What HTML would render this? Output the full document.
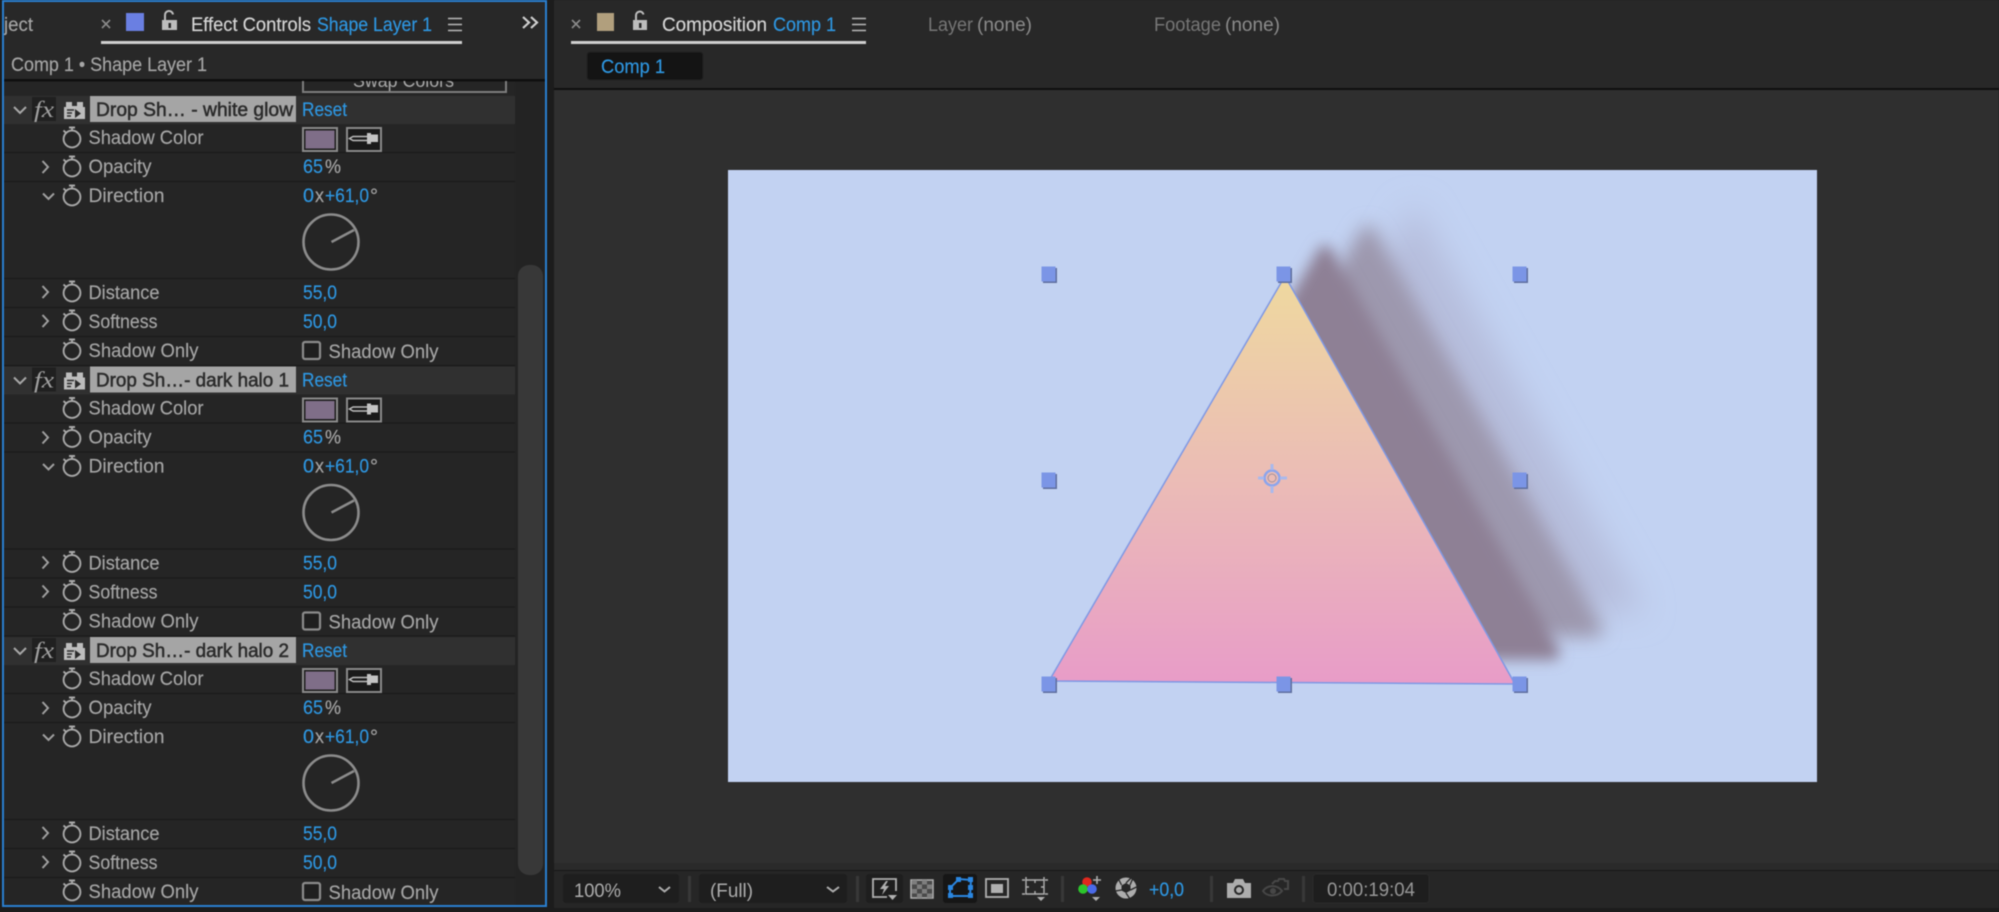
<!DOCTYPE html>
<html lang="en">
<head>
<meta charset="utf-8">
<title>Effect Controls</title>
<style>
html,body{margin:0;padding:0;background:#1c1c1c;width:1999px;height:912px;overflow:hidden}
svg{display:block}
text{font-family:"Liberation Sans",sans-serif;font-size:19px;white-space:pre}
.l{fill:#a6a6a6;stroke:#a6a6a6;stroke-width:.15}
.b{fill:#2e97e2;stroke:#2e97e2;stroke-width:.15}
.h{fill:#d6d6d6;stroke:#d6d6d6;stroke-width:.15}
.n{fill:#2b2b2b;stroke:#2b2b2b;stroke-width:.5}
.f{font-family:"Liberation Serif",serif;font-style:italic;font-size:23px;fill:#a0a0a0}
</style>
</head>
<body>
<svg xmlns="http://www.w3.org/2000/svg" width="1999" height="912" viewBox="0 0 1999 912">
<defs>
<linearGradient id="tri" x1="0" y1="276" x2="0" y2="684" gradientUnits="userSpaceOnUse">
<stop offset="0" stop-color="#efd99f"/><stop offset=".5" stop-color="#ebbcb6"/><stop offset="1" stop-color="#e89cc8"/>
</linearGradient>
<filter id="b1" x="-30%" y="-30%" width="160%" height="160%"><feGaussianBlur stdDeviation="7"/></filter>
<filter id="b2" x="-30%" y="-30%" width="160%" height="160%"><feGaussianBlur stdDeviation="9"/></filter>
<filter id="b3" x="-30%" y="-30%" width="160%" height="160%"><feGaussianBlur stdDeviation="16"/></filter>
<g id="sw" fill="none" stroke="#a8a8a8" stroke-width="1.9">
<circle cx="0" cy="2" r="8.400"/><path d="M-3 -9.500H3M0 -9.500V-6.500M-8.500 -6.500L-6 -4.200"/>
</g>
<g id="handle"><rect x="-6" y="-6" width="14" height="15" fill="#5f6f9f"/><rect x="-7.500" y="-7.500" width="14" height="15" fill="#7b95e6"/></g>
<g id="block">
<rect x="4" y="96" width="511" height="28" fill="#303030"/>
<rect x="4" y="124" width="511" height="241" fill="#252525"/>
<path d="M4 152.500H515M4 181.500H515M4 278.500H515M4 307.500H515M4 336.500H515M4 365.500H515" stroke="#1c1c1c" stroke-width="1.400"/>
<path d="M14 107l6 6 6-6" fill="none" stroke="#a8a8a8" stroke-width="2"/>
<rect x="32" y="97" width="24" height="24" fill="#202020"/>
<path d="M64 107h2v-5h6v4h5v-4h6v5h2v12H64z" fill="#bdbdbd"/>
<path d="M67 110h7M67 113h5M67 116h4" stroke="#2b2b2b" stroke-width="1.500"/><path d="M75 109l6 4.500-6 4.500z" fill="#2b2b2b"/>
<rect x="90" y="96" width="206" height="26" fill="#a5a5a5"/>
<use href="#sw" x="72" y="137"/><use href="#sw" x="72" y="166"/><use href="#sw" x="72" y="195"/>
<use href="#sw" x="72" y="291"/><use href="#sw" x="72" y="320"/><use href="#sw" x="72" y="349"/>
<path d="M42.500 161l5.500 6-5.500 6M43 193.500l5.500 5.500 5.500-5.500M42.500 286l5.500 6-5.500 6M42.500 315l5.500 6-5.500 6" fill="none" stroke="#a0a0a0" stroke-width="2"/>
<rect x="303" y="128" width="34" height="23" fill="#1d1d1d" stroke="#8a8a8a" stroke-width="2"/>
<rect x="305.500" y="130.500" width="29" height="18" fill="#7f6e88"/>
<rect x="347" y="128" width="34" height="23" fill="#1a1a1a" stroke="#8a8a8a" stroke-width="2"/>
<path d="M367 136.500H353l-3.500 2 3.500 2h14" fill="none" stroke="#bdbdbd" stroke-width="1.500"/>
<path d="M367 133h4v1.500h7v7.500h-7v2h-4z" fill="#c4c4c4"/>
<circle cx="331" cy="242" r="27.500" fill="none" stroke="#8c8c8c" stroke-width="2.600"/>
<path d="M331.500 242L354 230" stroke="#8c8c8c" stroke-width="2.600"/>
<rect x="303" y="342" width="17" height="17" rx="2" fill="#1f1f1f" stroke="#8c8c8c" stroke-width="2.200"/>
</g>
</defs>

<rect width="1999" height="912" fill="#1c1c1c"/>
<g style="filter:blur(.4px)">
<!-- LEFT PANEL -->
<rect x="3" y="1" width="543" height="905" fill="#252525"/>
<rect x="3" y="1" width="543" height="79" fill="#282828"/>
<rect x="4" y="81" width="511" height="15" fill="#252525"/>
<rect x="515" y="81" width="31" height="825" fill="#232323"/>
<use href="#block"/><use href="#block" y="270.500"/><use href="#block" y="541"/>
<rect x="518" y="265" width="25" height="610" rx="11" fill="#383838"/>
<rect x="3" y="79" width="543" height="2.500" fill="#0f0f0f"/>
<text class="l" x="4" y="31" textLength="29" lengthAdjust="spacingAndGlyphs">ject</text>
<path d="M102 20l8 8M110 20l-8 8" stroke="#8a8a8a" stroke-width="1.600"/>
<rect x="126" y="13" width="18" height="18" fill="#6a7fe2"/>
<path d="M162 20h15v10h-15z" fill="#bdbdbd"/><path d="M165 20v-4.500a4 4 0 0 1 8-1" fill="none" stroke="#bdbdbd" stroke-width="2"/><rect x="168.500" y="23" width="2.500" height="5" fill="#282828"/>
<text class="h" x="191" y="31" textLength="120" lengthAdjust="spacingAndGlyphs">Effect Controls</text>
<text class="b" x="317" y="31" textLength="115" lengthAdjust="spacingAndGlyphs">Shape Layer 1</text>
<path d="M448 18.500h14M448 24.500h14M448 30.500h14" stroke="#b8b8b8" stroke-width="1.600"/>
<rect x="101" y="41" width="361" height="3" fill="#cfcfcf"/>
<path d="M523 17l6 5.500-6 5.500M531 17l6 5.500-6 5.500" fill="none" stroke="#d0d0d0" stroke-width="2.200"/>
<text class="l" x="11" y="71" textLength="196" lengthAdjust="spacingAndGlyphs">Comp 1 • Shape Layer 1</text>

<!-- Swap Colors -->
<svg x="290" y="81" width="230" height="14" viewBox="290 81 230 14">
<text x="353" y="87" fill="#a8a8a8" textLength="101" lengthAdjust="spacingAndGlyphs">Swap Colors</text>
<path d="M303 81V92H506V81" fill="none" stroke="#7d7d7d" stroke-width="2"/>
</svg>

<!-- Block 1 -->
<g>
<text class="f" x="34" y="117" textLength="20" lengthAdjust="spacingAndGlyphs">fx</text>
<text class="n" x="96" y="116" textLength="197" lengthAdjust="spacingAndGlyphs">Drop Sh… - white glow</text>
<text class="b" x="302" y="116" textLength="45" lengthAdjust="spacingAndGlyphs">Reset</text>
<text class="l" x="88.500" y="144" textLength="115" lengthAdjust="spacingAndGlyphs">Shadow Color</text>
<text class="l" x="88.500" y="173" textLength="63" lengthAdjust="spacingAndGlyphs">Opacity</text>
<text class="b" x="303" y="173" textLength="20" lengthAdjust="spacingAndGlyphs">65</text><text class="l" x="325" y="173" textLength="16" lengthAdjust="spacingAndGlyphs">%</text>
<text class="l" x="88.500" y="202" textLength="76" lengthAdjust="spacingAndGlyphs">Direction</text>
<text class="b" x="303" y="202" textLength="11" lengthAdjust="spacingAndGlyphs">0</text><text class="l" x="315" y="202" textLength="9" lengthAdjust="spacingAndGlyphs">x</text><text class="b" x="325" y="202" textLength="44" lengthAdjust="spacingAndGlyphs">+61,0</text><text class="l" x="370" y="202" textLength="8" lengthAdjust="spacingAndGlyphs">°</text>
<text class="l" x="88.500" y="299" textLength="71" lengthAdjust="spacingAndGlyphs">Distance</text>
<text class="b" x="303" y="299" textLength="34" lengthAdjust="spacingAndGlyphs">55,0</text>
<text class="l" x="88.500" y="328" textLength="69" lengthAdjust="spacingAndGlyphs">Softness</text>
<text class="b" x="303" y="328" textLength="34" lengthAdjust="spacingAndGlyphs">50,0</text>
<text class="l" x="88.500" y="357" textLength="110" lengthAdjust="spacingAndGlyphs">Shadow Only</text>
<text class="l" x="328.500" y="358" textLength="110" lengthAdjust="spacingAndGlyphs">Shadow Only</text>
</g>
<!-- Block 2 -->
<g transform="translate(0,270.500)">
<text class="f" x="34" y="117" textLength="20" lengthAdjust="spacingAndGlyphs">fx</text>
<text class="n" x="96" y="116" textLength="193" lengthAdjust="spacingAndGlyphs">Drop Sh…- dark halo 1</text>
<text class="b" x="302" y="116" textLength="45" lengthAdjust="spacingAndGlyphs">Reset</text>
<text class="l" x="88.500" y="144" textLength="115" lengthAdjust="spacingAndGlyphs">Shadow Color</text>
<text class="l" x="88.500" y="173" textLength="63" lengthAdjust="spacingAndGlyphs">Opacity</text>
<text class="b" x="303" y="173" textLength="20" lengthAdjust="spacingAndGlyphs">65</text><text class="l" x="325" y="173" textLength="16" lengthAdjust="spacingAndGlyphs">%</text>
<text class="l" x="88.500" y="202" textLength="76" lengthAdjust="spacingAndGlyphs">Direction</text>
<text class="b" x="303" y="202" textLength="11" lengthAdjust="spacingAndGlyphs">0</text><text class="l" x="315" y="202" textLength="9" lengthAdjust="spacingAndGlyphs">x</text><text class="b" x="325" y="202" textLength="44" lengthAdjust="spacingAndGlyphs">+61,0</text><text class="l" x="370" y="202" textLength="8" lengthAdjust="spacingAndGlyphs">°</text>
<text class="l" x="88.500" y="299" textLength="71" lengthAdjust="spacingAndGlyphs">Distance</text>
<text class="b" x="303" y="299" textLength="34" lengthAdjust="spacingAndGlyphs">55,0</text>
<text class="l" x="88.500" y="328" textLength="69" lengthAdjust="spacingAndGlyphs">Softness</text>
<text class="b" x="303" y="328" textLength="34" lengthAdjust="spacingAndGlyphs">50,0</text>
<text class="l" x="88.500" y="357" textLength="110" lengthAdjust="spacingAndGlyphs">Shadow Only</text>
<text class="l" x="328.500" y="358" textLength="110" lengthAdjust="spacingAndGlyphs">Shadow Only</text>
</g>
<!-- Block 3 -->
<g transform="translate(0,541)">
<text class="f" x="34" y="117" textLength="20" lengthAdjust="spacingAndGlyphs">fx</text>
<text class="n" x="96" y="116" textLength="193" lengthAdjust="spacingAndGlyphs">Drop Sh…- dark halo 2</text>
<text class="b" x="302" y="116" textLength="45" lengthAdjust="spacingAndGlyphs">Reset</text>
<text class="l" x="88.500" y="144" textLength="115" lengthAdjust="spacingAndGlyphs">Shadow Color</text>
<text class="l" x="88.500" y="173" textLength="63" lengthAdjust="spacingAndGlyphs">Opacity</text>
<text class="b" x="303" y="173" textLength="20" lengthAdjust="spacingAndGlyphs">65</text><text class="l" x="325" y="173" textLength="16" lengthAdjust="spacingAndGlyphs">%</text>
<text class="l" x="88.500" y="202" textLength="76" lengthAdjust="spacingAndGlyphs">Direction</text>
<text class="b" x="303" y="202" textLength="11" lengthAdjust="spacingAndGlyphs">0</text><text class="l" x="315" y="202" textLength="9" lengthAdjust="spacingAndGlyphs">x</text><text class="b" x="325" y="202" textLength="44" lengthAdjust="spacingAndGlyphs">+61,0</text><text class="l" x="370" y="202" textLength="8" lengthAdjust="spacingAndGlyphs">°</text>
<text class="l" x="88.500" y="299" textLength="71" lengthAdjust="spacingAndGlyphs">Distance</text>
<text class="b" x="303" y="299" textLength="34" lengthAdjust="spacingAndGlyphs">55,0</text>
<text class="l" x="88.500" y="328" textLength="69" lengthAdjust="spacingAndGlyphs">Softness</text>
<text class="b" x="303" y="328" textLength="34" lengthAdjust="spacingAndGlyphs">50,0</text>
<text class="l" x="88.500" y="357" textLength="110" lengthAdjust="spacingAndGlyphs">Shadow Only</text>
<text class="l" x="328.500" y="358" textLength="110" lengthAdjust="spacingAndGlyphs">Shadow Only</text>
</g>
<!-- panel focus border -->
<rect x="3" y="1" width="543" height="905" fill="none" stroke="#2a7fd0" stroke-width="2"/>

<!-- RIGHT PANEL -->
<rect x="554" y="0" width="1445" height="88" fill="#282828"/>
<rect x="554" y="88" width="1445" height="2" fill="#0f0f0f"/>
<rect x="554" y="90" width="1445" height="773" fill="#2f2f2f"/>
<rect x="554" y="863" width="1445" height="7" fill="#2a2a2a"/>
<rect x="554" y="870" width="1445" height="1.500" fill="#181818"/>
<rect x="554" y="871" width="1445" height="37" fill="#262626"/>
<path d="M572 20l8 8M580 20l-8 8" stroke="#8a8a8a" stroke-width="1.600"/>
<rect x="597" y="13" width="17" height="18" fill="#b19f7d"/>
<path d="M633 20h14v10h-14z" fill="#bdbdbd"/><path d="M636 20v-4.500a3.800 3.800 0 0 1 7.500-1" fill="none" stroke="#bdbdbd" stroke-width="2"/><rect x="639" y="23" width="2.500" height="5" fill="#282828"/>
<text class="h" x="662" y="31" textLength="105" lengthAdjust="spacingAndGlyphs">Composition</text>
<text class="b" x="773" y="31" textLength="63" lengthAdjust="spacingAndGlyphs">Comp 1</text>
<path d="M852 18.500h14M852 24.500h14M852 30.500h14" stroke="#b8b8b8" stroke-width="1.600"/>
<rect x="571" y="41" width="295" height="3" fill="#cfcfcf"/>
<text x="928" y="31" fill="#767676" textLength="45" lengthAdjust="spacingAndGlyphs">Layer</text>
<text x="977" y="31" fill="#8c8c8c" textLength="55" lengthAdjust="spacingAndGlyphs">(none)</text>
<text x="1154" y="31" fill="#767676" textLength="67" lengthAdjust="spacingAndGlyphs">Footage</text>
<text x="1225" y="31" fill="#8c8c8c" textLength="55" lengthAdjust="spacingAndGlyphs">(none)</text>
<rect x="587" y="52" width="116" height="28" rx="3" fill="#141414" stroke="#232323"/>
<text class="b" x="601" y="73" textLength="64" lengthAdjust="spacingAndGlyphs">Comp 1</text>

<!-- COMP -->
<rect x="728" y="170" width="1089" height="612" fill="#c2d2f2"/>
<svg x="728" y="170" width="1089" height="612" viewBox="728 170 1089 612">
<polygon points="1415,204 1179,609 1645,612" fill="#b6bddc" filter="url(#b3)"/>
<polygon points="1368,232 1135,628 1596,630" fill="#9d98ae" stroke="#9d98ae" stroke-width="14" stroke-linejoin="round" filter="url(#b2)"/>
<polygon points="1325,252 1093,651 1553,653" fill="#8e8095" stroke="#8e8095" stroke-width="14" stroke-linejoin="round" filter="url(#b1)"/>
<polygon points="1285,276 1049,681 1515,684" fill="url(#tri)" stroke="#7f98e4" stroke-width="1.500"/>
<g fill="none">
<circle cx="1272" cy="478" r="7.500" stroke="#8ba4ec" stroke-width="2.500"/>
<circle cx="1272" cy="478" r="4" stroke="#a08f9a" stroke-width="1"/>
<path d="M1272 464v6M1272 486v7M1258 478h6M1280 478h7" stroke="#a9b9ec" stroke-width="3"/>
</g>
<use href="#handle" x="1049" y="274"/><use href="#handle" x="1284" y="274"/><use href="#handle" x="1520" y="274"/>
<use href="#handle" x="1049" y="480"/><use href="#handle" x="1520" y="480"/>
<use href="#handle" x="1049" y="684"/><use href="#handle" x="1284" y="684"/><use href="#handle" x="1520" y="684"/>
</svg>

<!-- TOOLBAR -->
<rect x="563" y="874" width="116" height="29" rx="3" fill="#1e1e1e"/>
<text x="574" y="897" fill="#adadad" textLength="47" lengthAdjust="spacingAndGlyphs">100%</text>
<path d="M659 887l5.500 4.500 5.500-4.500" fill="none" stroke="#adadad" stroke-width="2"/>
<rect x="688" y="876" width="3" height="26" fill="#383838"/>
<rect x="699" y="874" width="148" height="29" rx="3" fill="#1e1e1e"/>
<text x="710" y="897" fill="#adadad" textLength="43" lengthAdjust="spacingAndGlyphs">(Full)</text>
<path d="M827 887l6 4.500 6-4.500" fill="none" stroke="#adadad" stroke-width="2"/>
<rect x="856" y="876" width="3" height="26" fill="#383838"/>
<rect x="866" y="874" width="37" height="29" rx="3" fill="#1e1e1e"/>
<path d="M873 898v-19h23v12M873 897h14" fill="none" stroke="#b0b0b0" stroke-width="1.800"/>
<path d="M886 881l-6 8h4l-2 6 7-9h-4l3-5z" fill="#b0b0b0"/><path d="M888 895h9l-4.500 5z" fill="#b0b0b0"/>
<rect x="911" y="880" width="22" height="18" fill="#4a4a4a" stroke="#b0b0b0" stroke-width="1.500"/>
<path d="M912 880h5v4.500h-5zM922 880h5v4.500h-5zM917 884.500h5v4.500h-5zM927 884.500h5v4.500h-5zM912 889h5v4.500h-5zM922 889h5v4.500h-5zM917 893.500h5v4.500h-5zM927 893.500h5v4.500h-5z" fill="#7e7e7e"/>
<rect x="943" y="874" width="34" height="29" rx="3" fill="#161616"/>
<path d="M950 896h20l1-16-12-1-9 9z" fill="none" stroke="#2a86e0" stroke-width="2"/>
<path d="M948 893h5v5h-5zM968 893h5v5h-5zM968 877h5v5h-5zM956 877h5v5h-5zM948 885h5v5h-5zM968 885h5v5h-5z" fill="#2a86e0"/>
<rect x="986" y="879" width="22" height="18" fill="none" stroke="#b0b0b0" stroke-width="1.800"/>
<rect x="991" y="884" width="12" height="9" fill="#b0b0b0"/>
<path d="M1026 880h18v14h-18zM1026 887h3M1041 887h3M1035 880v3M1035 891v3M1022 880h3M1022 894h3M1045 880h3M1045 894h3M1026 877v3M1044 877v3" fill="none" stroke="#b0b0b0" stroke-width="1.400"/>
<path d="M1037 897h8l-4 4z" fill="#b0b0b0"/>
<rect x="1061" y="876" width="3" height="26" fill="#383838"/>
<circle cx="1087" cy="882" r="4.800" fill="#e0281e"/>
<circle cx="1083" cy="889" r="4.800" fill="#2cc52c"/>
<circle cx="1092" cy="889" r="4.800" fill="#4a6ae8"/>
<path d="M1097 876v8M1093 880h8" stroke="#b0b0b0" stroke-width="1.600"/>
<path d="M1092 897h8l-4 4z" fill="#b0b0b0"/>
<circle cx="1126" cy="888" r="10.500" fill="#adadad"/>
<path d="M1126 883l4.500 2.500v5l-4.500 2.500-4.500-2.500v-5z" fill="#262626"/>
<path d="M1130 885l3-7M1130.500 890l6-3M1126 893l4 6M1121.500 890l-6 1M1121.500 885l-3-6M1126 883l5-5" stroke="#262626" stroke-width="1.300"/>
<text class="b" x="1149" y="896" textLength="35" lengthAdjust="spacingAndGlyphs">+0,0</text>
<rect x="1210" y="876" width="3" height="26" fill="#383838"/>
<path d="M1227 883h6l2-4h8l2 4h6v15h-24z" fill="#adadad"/><circle cx="1239" cy="890" r="4" fill="none" stroke="#262626" stroke-width="2"/>
<path d="M1263 891c4-6 14-7 19 0-5 6-15 6-19 0z" fill="none" stroke="#474747" stroke-width="2"/><circle cx="1273" cy="891" r="3" fill="#474747"/>
<path d="M1272 884l3-3h3l1-2h5l1 2h3v8h-4" fill="none" stroke="#474747" stroke-width="2"/>
<rect x="1302" y="876" width="3" height="26" fill="#383838"/>
<rect x="1313" y="874" width="116" height="29" rx="3" fill="#1e1e1e" stroke="#2a2a2a"/>
<text x="1327" y="896" fill="#979797" textLength="88" lengthAdjust="spacingAndGlyphs">0:00:19:04</text>
</g>
</svg>
</body>
</html>
